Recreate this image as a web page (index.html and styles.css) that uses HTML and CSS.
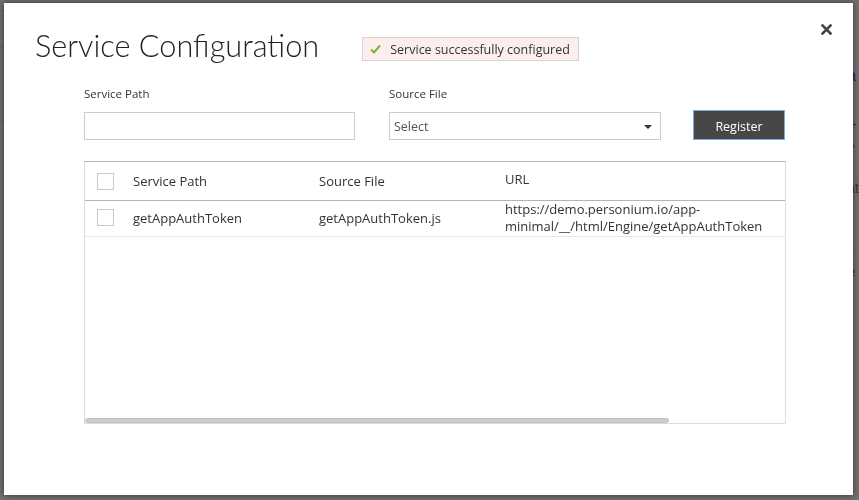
FILE: index.html
```html
<!DOCTYPE html>
<html lang="en">
<head>
<meta charset="utf-8">
<title>Service Configuration</title>
<link rel="stylesheet" href="styles.css">
</head>
<body>
<div class="page">
  <div class="page-main">
    <div class="page-row"></div>
    <div class="page-row"></div>
    <div class="page-row"></div>
    <div class="page-row"></div>
  </div>
  <div class="page-aside">
    <p class="aside-i">i</p>
    <p class="aside-a">a</p>
    <p class="aside-t1">T</p>
    <p class="aside-s">y</p>
    <p class="aside-s">t</p>
    <p class="aside-s aside-brown">at</p>
    <p class="aside-big">t</p>
    <p class="aside-s">e</p>
  </div>
</div>

<div class="modal">
  <button class="close" type="button" aria-label="Close">
    <svg width="11" height="11" viewBox="0 0 11 11"><path d="M1.5 1.5 L9.5 9.5 M9.5 1.5 L1.5 9.5" stroke="#444" stroke-width="2.6" stroke-linecap="square" fill="none"/></svg>
  </button>
  <div class="modal-header">
    <h1 class="title">Service Configuration</h1>
    <div class="alert">
      <svg class="alert-check" width="11" height="10" viewBox="0 0 11 10"><path d="M1 5.5 L4 8.5 L10 1.5" stroke="#7bb52a" stroke-width="2" fill="none"/></svg>
      <span>Service successfully configured</span>
    </div>
  </div>

  <div class="form">
    <div class="field field-path">
      <label class="label">Service Path</label>
      <input class="input" type="text">
    </div>
    <div class="field field-src">
      <label class="label">Source File</label>
      <div class="select">
        <span>Select</span>
        <span class="caret"></span>
      </div>
    </div>
    <button class="btn" type="button">Register</button>
  </div>

  <div class="table-wrap">
    <table class="grid">
      <colgroup>
        <col class="c-check"><col class="c-path"><col class="c-src"><col class="c-url">
      </colgroup>
      <thead>
        <tr>
          <th><span class="cb"></span></th>
          <th>Service Path</th>
          <th>Source File</th>
          <th class="th-url">URL</th>
        </tr>
      </thead>
      <tbody>
        <tr>
          <td><span class="cb"></span></td>
          <td>getAppAuthToken</td>
          <td>getAppAuthToken.js</td>
          <td class="td-url">https://demo.personium.io/app-minimal/__/html/Engine/getAppAuthToken</td>
        </tr>
      </tbody>
    </table>
    <div class="scroll-track"><div class="scroll-thumb"></div></div>
  </div>
</div>
</body>
</html>
```

FILE: styles.css
```css
* { box-sizing: border-box; }

html, body {
  margin: 0;
  height: 500px;
  overflow: hidden;
}

body {
  background: #707070;
  font-family: "Open Sans", "Liberation Sans", sans-serif;
  color: #333;
}

/* background page (dimmed) */
.page {
  display: flex;
  height: 500px;
}
.page-main {
  width: 853px;
  padding-top: 10px;
}
.page-row {
  height: 37px;
  border-top: 1px solid #646464;
}
.page-aside {
  flex: 1;
  padding-top: 28px;
  color: #2a2a3a;
  font-family: "Liberation Sans", sans-serif;
}
.page-aside p { margin: 0; padding-left: 1px; }
.aside-i { font-size: 18px; line-height: 20px; }
.aside-a { font-size: 16px; line-height: 20px; margin-top: 18px !important; }
.aside-t1 { font-size: 14px; line-height: 18px; margin-top: 34px !important; color: #3a1f3a; }
.aside-s { font-size: 14px; line-height: 20px; }
.aside-brown { color: #4a3020; }
.aside-big { font-size: 22px; line-height: 26px; margin-top: 38px !important; }

/* modal */
.modal {
  position: fixed;
  left: 4px;
  top: 3px;
  width: 849px;
  height: 492px;
  background: #fff;
  box-shadow: 0 0 6px rgba(0, 0, 0, 0.55);
}

.close {
  position: absolute;
  right: 21px;
  top: 20px;
  width: 12px;
  height: 12px;
  padding: 0;
  border: 0;
  background: none;
  display: flex;
  align-items: center;
  justify-content: center;
}

.modal-header {
  display: flex;
  align-items: flex-start;
  padding: 23px 0 0 31px;
}

.title {
  margin: 0;
  font-family: "Lato", "Open Sans", sans-serif;
  font-size: 30.7px;
  font-weight: 300;
  line-height: 40px;
  color: #222;
}

.alert {
  margin: 11px 0 0 43px;
  height: 24px;
  display: flex;
  align-items: center;
  gap: 9px;
  padding: 0 8px 0 7px;
  border: 1px solid #d9d0d0;
  background: #fdeeee;
  font-size: 12.5px;
  color: #333;
}
.alert-check { display: block; }

/* form */
.form {
  display: flex;
  align-items: flex-end;
  margin: 20px 0 0 80px;
}
.field {
  display: flex;
  flex-direction: column;
}
.field-path { width: 271px; }
.field-src { width: 272px; margin-left: 34px; }
.label {
  font-size: 11.5px;
  line-height: 16px;
  margin-bottom: 10px;
  color: #333;
}
.input {
  height: 28px;
  border: 1px solid #ccc;
  background: #fff;
  margin: 0;
  padding: 0 4px;
  font: inherit;
}
.select {
  height: 28px;
  border: 1px solid #ccc;
  background: #fff;
  display: flex;
  align-items: center;
  justify-content: space-between;
  padding: 1px 8px 0 4px;
  font-size: 12.5px;
  color: #555;
}
.caret {
  width: 0;
  height: 0;
  border-left: 4px solid transparent;
  border-right: 4px solid transparent;
  border-top: 4px solid #333;
}
.btn {
  margin-left: 32px;
  width: 92px;
  height: 30px;
  background: #474747;
  border: 1px solid #7ea8e6;
  color: #fff;
  font-family: inherit;
  font-size: 12.5px;
  padding: 2px 0 0;
}

/* table */
.table-wrap {
  margin: 21px 0 0 80px;
  width: 702px;
  height: 263px;
  border: 1px solid #ddd;
  border-top-color: #b4b4b4;
  display: flex;
  flex-direction: column;
}
.grid {
  border-collapse: collapse;
  table-layout: fixed;
  width: 700px;
  font-size: 13px;
  color: #333;
}
.c-check { width: 36px; }
.c-path { width: 186px; }
.c-src { width: 186px; }
.c-url { width: 292px; }

.grid th {
  height: 38px;
  font-weight: 400;
  text-align: left;
  padding: 0 0 0 12px;
  border-bottom: 1px solid #b4b4b4;
  vertical-align: middle;
}
.grid th.th-url { padding-bottom: 4px; }
.grid td {
  height: 36px;
  padding: 0 0 0 12px;
  border-bottom: 1px solid #e6e6e6;
  vertical-align: middle;
  line-height: 17px;
}
.grid td.td-url { padding-right: 14px; padding-bottom: 0; }

.cb {
  display: block;
  width: 17px;
  height: 17px;
  border: 1px solid #c8c8c8;
  background: #fff;
}
.grid th .cb { margin-top: 1px; }
.grid td .cb { margin-top: -2px; }

.scroll-track {
  margin-top: auto;
  height: 5px;
  margin-bottom: 0;
}
.scroll-thumb {
  width: 584px;
  height: 5px;
  background: #cdcdcd;
  border: 1px solid #c2c2c2;
  border-radius: 3px;
}
```
